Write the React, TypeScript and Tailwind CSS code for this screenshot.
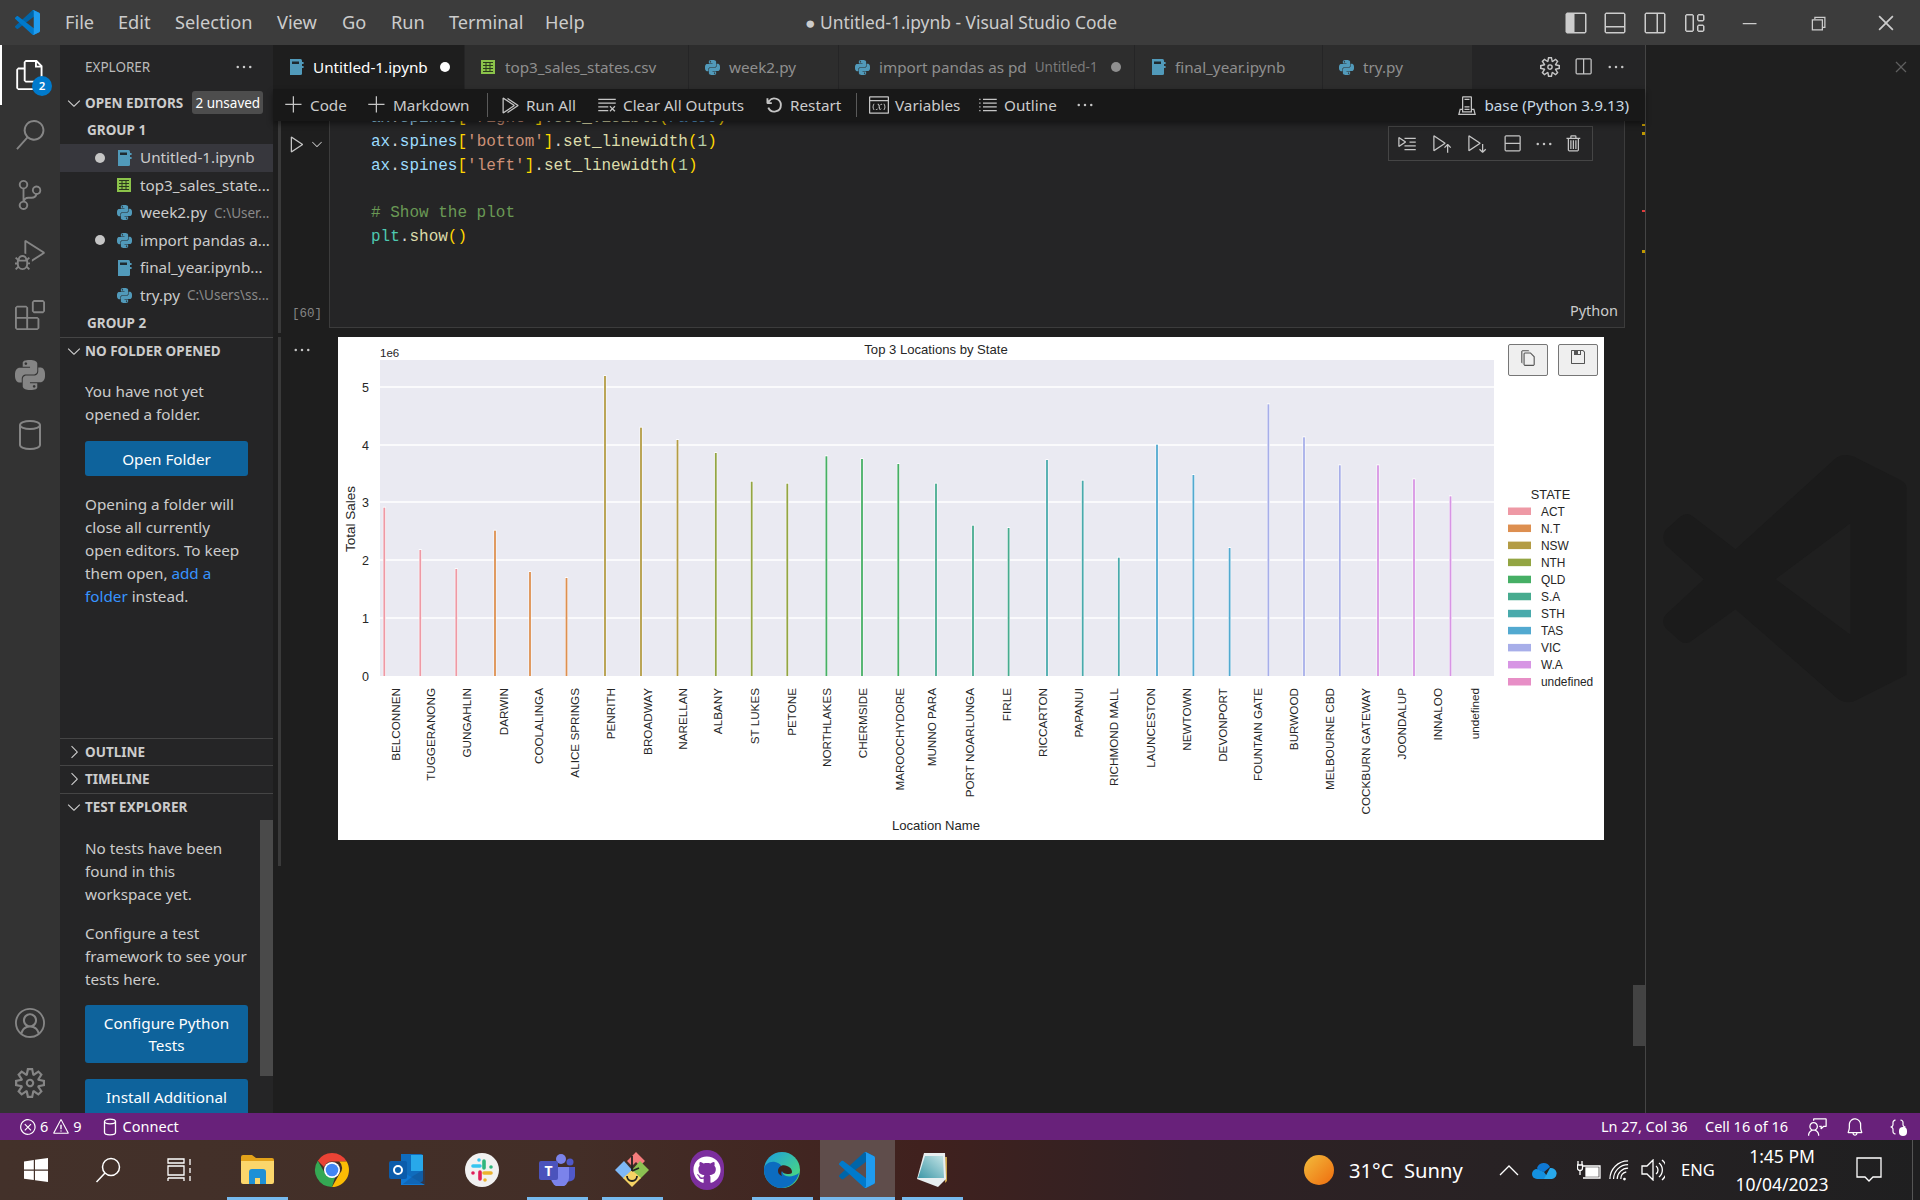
import type { ReactNode } from "react";
import {
  VscAccount, VscAdd, VscBell, VscChevronDown, VscChevronRight, VscChromeClose, VscChromeMinimize, VscChromeRestore,
  VscClearAll, VscClose, VscCopy, VscDebugAlt, VscDebugLineByLine, VscDebugRestart, VscEllipsis, VscError, VscExtensions,
  VscFeedback, VscFiles, VscJson, VscLayout, VscLayoutPanelOff, VscLayoutSidebarLeft, VscLayoutSidebarRightOff, VscListUnordered,
  VscPlay, VscRunAbove, VscRunAll, VscRunBelow, VscSave, VscSearch, VscServerEnvironment, VscSettingsGear, VscSourceControl,
  VscSplitHorizontal, VscSplitVertical, VscTrash, VscVariableGroup, VscWarning,
} from "react-icons/vsc";
import { SiPython } from "react-icons/si";
import { FaGithub } from "react-icons/fa";

function VsLogo({ size }: { size: number }) {
  return (
    <svg width={size} height={size} viewBox="0 0 100 100">
      <path fill="#0065A9" d="M96.46 10.8 75.86.88c-2.39-1.15-5.24-.66-7.11 1.2L1.3 63.58c-1.81 1.66-1.81 4.51 0 6.16l5.51 5.01c1.49 1.35 3.72 1.45 5.32.24L93.36 13.37c2.73-2.07 6.64-.12 6.64 3.3v-.24c0-2.4-1.38-4.59-3.54-5.63Z" />
      <path fill="#007ACC" d="M96.46 89.2 75.86 99.12c-2.39 1.15-5.24.66-7.11-1.2L1.3 36.42c-1.81-1.66-1.81-4.51 0-6.17l5.51-5c1.49-1.35 3.72-1.45 5.32-.24l81.23 61.62c2.73 2.07 6.64.12 6.64-3.3v.24c0 2.4-1.38 4.59-3.54 5.63Z" />
      <path fill="#1F9CF0" d="M75.86 99.13c-2.39 1.14-5.24.66-7.11-1.21 2.31 2.3 6.25.67 6.25-2.59V4.67c0-3.26-3.94-4.89-6.25-2.59C70.62.21 73.47-.27 75.86.87l20.6 9.91c2.16 1.04 3.54 3.23 3.54 5.63v67.18c0 2.4-1.38 4.59-3.54 5.63l-20.6 9.91Z" />
    </svg>
  );
}

function NotebookIcon() {
  return (
    <svg width="18" height="18" viewBox="0 0 18 18">
      <path fill="#519aba" d="M3 1h10.5a1.5 1.5 0 0 1 1.5 1.5v13a1.5 1.5 0 0 1-1.5 1.5H3Z" />
      <rect x="5" y="3.5" width="7" height="2.5" fill="#1e2a30" />
      <rect x="15" y="4" width="1.6" height="2" fill="#519aba" />
      <rect x="15" y="8" width="1.6" height="2" fill="#519aba" />
    </svg>
  );
}

function CsvIcon() {
  return (
    <svg width="18" height="18" viewBox="0 0 18 18">
      <rect x="2" y="2" width="14" height="14" fill="#8bc34a" />
      <path stroke="#2b3a1c" strokeWidth="1" fill="none" d="M4 4.5h10M4 7.5h10M4 10.5h10M4 13.5h10M7 4.5v9M11 4.5v9" />
    </svg>
  );
}

function PyIcon() {
  return <SiPython size={15} color="#519aba" />;
}

function Dot({ className }: { className: string }) {
  return <span className={`block h-[10px] w-[10px] rounded-full ${className}`} />;
}

function ActivityIcon({ children, active }: { children: ReactNode; active?: boolean }) {
  return (
    <div className={`relative flex h-[60px] w-[60px] shrink-0 items-center justify-center ${active ? "border-l-2 border-white pr-[2px] text-white" : "text-[#858585]"}`}>
      {children}
    </div>
  );
}

function ActivityBar() {
  return (
    <div className="flex w-[60px] shrink-0 flex-col bg-[#333333]">
      <ActivityIcon active>
        <VscFiles size={30} />
        <span className="absolute left-[30px] top-[31px] flex h-[20px] w-[20px] items-center justify-center rounded-full bg-[#007acc] text-[11.5px] font-semibold text-white">2</span>
      </ActivityIcon>
      <ActivityIcon><VscSearch size={30} /></ActivityIcon>
      <ActivityIcon><VscSourceControl size={30} /></ActivityIcon>
      <ActivityIcon><VscDebugAlt size={30} /></ActivityIcon>
      <ActivityIcon><VscExtensions size={30} /></ActivityIcon>
      <ActivityIcon><SiPython size={30} /></ActivityIcon>
      <ActivityIcon>
        <svg width="30" height="32" viewBox="0 0 30 32" fill="none" stroke="#858585" strokeWidth="2">
          <ellipse cx="15" cy="6" rx="10" ry="4" />
          <path d="M5 6v20c0 2.2 4.5 4 10 4s10-1.8 10-4V6" />
        </svg>
      </ActivityIcon>
      <div className="mt-auto" />
      <ActivityIcon><VscAccount size={30} /></ActivityIcon>
      <ActivityIcon><VscSettingsGear size={30} /></ActivityIcon>
    </div>
  );
}

function SectionHeader({ title, open, border = true, children }: { title: string; open?: boolean; border?: boolean; children?: ReactNode }) {
  return (
    <div className={`flex h-[27.5px] shrink-0 items-center text-[13.5px] font-bold text-[#cccccc] ${border ? "border-t border-[#454545]" : ""}`}>
      <span className="flex w-[25px] justify-center pl-[2px]">
        {open ? <VscChevronDown size={20} /> : <VscChevronRight size={20} />}
      </span>
      <span className="whitespace-nowrap">{title}</span>
      {children}
    </div>
  );
}

function FileRow({ icon, name, dim, dirty, active }: { icon: ReactNode; name: string; dim?: string; dirty?: boolean; active?: boolean }) {
  return (
    <div className={`flex h-[27.5px] shrink-0 items-center overflow-hidden whitespace-nowrap pl-[35px] text-[15.25px] text-[#cccccc] ${active ? "bg-[#37373d]" : ""}`}>
      <span className="w-[10px]">{dirty && <Dot className="bg-[#c5c5c5]" />}</span>
      <span className="ml-[10px] flex w-[18px] justify-center">{icon}</span>
      <span className="ml-[7px]">{name}</span>
      {dim && <span className="ml-[7px] text-[13.5px] text-[#8a8a8a]">{dim}</span>}
    </div>
  );
}

function GroupLabel({ children }: { children: ReactNode }) {
  return <div className="flex h-[27.5px] shrink-0 items-center pl-[27px] text-[13.5px] font-bold text-[#cccccc]">{children}</div>;
}

function BlueButton({ children, className }: { children: ReactNode; className: string }) {
  return <div className={`flex w-[163px] shrink-0 flex-col items-center rounded-[3px] bg-[#0e639c] text-center text-[15.25px] leading-[22px] text-white ${className}`}>{children}</div>;
}

function Sidebar() {
  return (
    <div className="relative flex w-[213px] shrink-0 flex-col overflow-hidden bg-[#252526]">
      <div className="flex h-[44px] shrink-0 items-center pl-[25px] text-[13.5px] text-[#bbbbbb]">
        EXPLORER
        <VscEllipsis size={20} className="ml-[84px] text-[#cccccc]" />
      </div>
      <SectionHeader title="OPEN EDITORS" open border={false}>
        <span className="ml-[9px] flex h-[23px] w-[71px] items-center justify-center rounded-[3px] bg-[#4d4d4d] text-[13.5px] font-normal text-white">2 unsaved</span>
      </SectionHeader>
      <GroupLabel>GROUP 1</GroupLabel>
      <FileRow active dirty icon={<NotebookIcon />} name="Untitled-1.ipynb" />
      <FileRow icon={<CsvIcon />} name="top3_sales_state..." />
      <FileRow icon={<PyIcon />} name="week2.py" dim="C:\User..." />
      <FileRow dirty icon={<PyIcon />} name="import pandas a..." />
      <FileRow icon={<NotebookIcon />} name="final_year.ipynb..." />
      <FileRow icon={<PyIcon />} name="try.py" dim="C:\Users\ss..." />
      <GroupLabel>GROUP 2</GroupLabel>

      <div className="flex h-[401px] shrink-0 flex-col">
        <SectionHeader title="NO FOLDER OPENED" open />
        <div className="flex flex-col pl-[25px] pr-[20px] pt-[16px] text-[15.25px] leading-[23px] text-[#cccccc]">
          <p>You have not yet<br />opened a folder.</p>
          <BlueButton className="mt-[15px] h-[35px] justify-center">Open Folder</BlueButton>
          <p className="mt-[17px]">
            Opening a folder will<br />close all currently<br />open editors. To keep<br />them open, <span className="text-[#3794ff]">add a<br />folder</span> instead.
          </p>
        </div>
      </div>
      <SectionHeader title="OUTLINE" />
      <SectionHeader title="TIMELINE" />
      <SectionHeader title="TEST EXPLORER" open />
      <div className="flex flex-col pl-[25px] pr-[20px] pt-[17px] text-[15.25px] leading-[23px] text-[#cccccc]">
        <p className="whitespace-nowrap">No tests have been<br />found in this<br />workspace yet.</p>
        <p className="mt-[16px] whitespace-nowrap">Configure a test<br />framework to see your<br />tests here.</p>
        <BlueButton className="mt-[14px] h-[58px] justify-center">Configure Python<br />Tests</BlueButton>
        <BlueButton className="mt-[16px] h-[58px] pt-[7px]">Install Additional</BlueButton>
      </div>
      {/* sidebar scrollbar */}
      <div className="absolute left-[200px] top-[775px] h-[256px] w-[13px] bg-[#4a4a4a]" />
    </div>
  );
}

function Tab({ width, icon, name, extra, active }: { width: string; icon: ReactNode; name: string; extra?: ReactNode; active?: boolean }) {
  return (
    <div className={`flex h-full shrink-0 items-center whitespace-nowrap border-r border-[#252526] pl-[14px] text-[15.25px] ${width} ${active ? "bg-[#1e1e1e] text-white" : "bg-[#2d2d2d] text-[#8f8f8f]"}`}>
      <span className="flex w-[18px] justify-center">{icon}</span>
      <span className="ml-[8px]">{name}</span>
      {extra}
    </div>
  );
}

function TabBar() {
  return (
    <div className="flex h-[44px] shrink-0 bg-[#252526]">
      <Tab active width="w-[192px]" icon={<NotebookIcon />} name="Untitled-1.ipynb" extra={<Dot className="ml-auto mr-[14px] bg-white" />} />
      <Tab width="w-[224px]" icon={<CsvIcon />} name="top3_sales_states.csv" />
      <Tab width="w-[150px]" icon={<PyIcon />} name="week2.py" />
      <Tab width="w-[296px]" icon={<PyIcon />} name="import pandas as pd" extra={
        <>
          <span className="ml-[8px] text-[13.5px] text-[#7b7b7b]">Untitled-1</span>
          <Dot className="ml-auto mr-[13px] bg-[#8f8f8f]" />
        </>
      } />
      <Tab width="w-[188px]" icon={<NotebookIcon />} name="final_year.ipynb" />
      <Tab width="w-[150px]" icon={<PyIcon />} name="try.py" />
      <div className="ml-auto flex items-center gap-[13px] pr-[19px] text-[#c5c5c5]">
        <VscSettingsGear size={20} />
        <VscSplitHorizontal size={20} />
        <VscEllipsis size={20} />
      </div>
    </div>
  );
}

function ToolItem({ width, icon, label }: { width: string; icon: ReactNode; label: string }) {
  return (
    <div className={`flex shrink-0 items-center gap-[6px] whitespace-nowrap ${width}`}>
      <span className="flex w-[20px] justify-center text-[#c5c5c5]">{icon}</span>
      {label}
    </div>
  );
}

function NotebookToolbar() {
  return (
    <div className="relative z-10 flex h-[32px] shrink-0 items-center bg-[#181818] pl-[11px] text-[15.25px] text-[#cccccc] shadow-[0_3px_6px_rgba(0,0,0,0.45)]">
      <ToolItem width="w-[83px]" icon={<VscAdd size={20} />} label="Code" />
      <ToolItem width="w-[110px]" icon={<VscAdd size={20} />} label="Markdown" />
      <div className="ml-[10px] h-[24px] w-px shrink-0 bg-[#5a5a5a]" />
      <div className="ml-[12px] flex">
        <ToolItem width="w-[97px]" icon={<VscRunAll size={20} />} label="Run All" />
        <ToolItem width="w-[167px]" icon={<VscClearAll size={20} />} label="Clear All Outputs" />
        <ToolItem width="w-[82px]" icon={<VscDebugRestart size={20} />} label="Restart" />
      </div>
      <div className="ml-[10px] h-[24px] w-px shrink-0 bg-[#5a5a5a]" />
      <div className="ml-[12px] flex items-center">
        <ToolItem width="w-[109px]" icon={<VscVariableGroup size={20} />} label="Variables" />
        <ToolItem width="w-[97px]" icon={<VscListUnordered size={20} />} label="Outline" />
        <VscEllipsis size={20} className="text-[#c5c5c5]" />
      </div>
      <div className="ml-auto flex items-center gap-[7px] pr-[16px] text-[#9cdcfe]">
        <VscServerEnvironment size={20} className="text-[#c5c5c5]" />
        <span className="whitespace-nowrap text-[#c8d8e4]">base (Python 3.9.13)</span>
      </div>
    </div>
  );
}

const kw = "text-[#9cdcfe]";
const pn = "text-[#d4d4d4]";
const br = "text-[#ffd700]";
const st = "text-[#ce9178]";
const fn = "text-[#dcdcaa]";
const nm = "text-[#b5cea8]";

function SpineLine({ side, call, arg }: { side: string; call: string; arg: string }) {
  return (
    <div className="h-[23.75px] whitespace-pre">
      <span className={kw}>ax</span><span className={pn}>.</span><span className={kw}>spines</span><span className={br}>[</span>
      <span className={st}>'{side}'</span><span className={br}>]</span><span className={pn}>.</span><span className={fn}>{call}</span>
      <span className={br}>(</span><span className={arg === "False" ? "text-[#569cd6]" : nm}>{arg}</span><span className={br}>)</span>
    </div>
  );
}

function CodeCell() {
  return (
    <div className="flex h-[207px] shrink-0">
      <div className="flex w-[56px] shrink-0 flex-col pb-[6px] pt-[13px]">
        <div className="flex items-center pl-[14px] text-[#c5c5c5]">
          <VscPlay size={20} />
          <VscChevronDown size={16} className="ml-[2px]" />
        </div>
        <div className="mt-auto pl-[19px] font-['Liberation_Mono',monospace] text-[12.5px] leading-[16px] text-[#858585]">[60]</div>
      </div>
      <div className="relative flex w-[1296px] shrink-0 flex-col overflow-hidden border-b border-l border-r border-[#3c3c3c] bg-[#252526]">
        <div className="-mt-[14px] ml-[41px] font-['Liberation_Mono',monospace] text-[16px] leading-[23.75px]">
          <SpineLine side="right" call="set_visible" arg="False" />
          <SpineLine side="bottom" call="set_linewidth" arg="1" />
          <SpineLine side="left" call="set_linewidth" arg="1" />
          <div className="h-[23.75px]" />
          <div className="h-[23.75px] text-[#6a9955]"># Show the plot</div>
          <div className="h-[23.75px]">
            <span className="text-[#4ec9b0]">plt</span><span className={pn}>.</span><span className={fn}>show</span><span className={br}>()</span>
          </div>
        </div>
        <div className="mb-[5px] mr-[6px] mt-auto self-end text-[14.5px] text-[#cccccc]">Python</div>

        <div className="absolute right-[31px] top-[5px] flex h-[35px] w-[205px] items-center border border-[#454545] bg-[#252526] text-[#c5c5c5]">
          <span className="flex w-[35px] justify-center"><VscDebugLineByLine size={20} /></span>
          <span className="flex w-[35px] justify-center"><VscRunAbove size={20} /></span>
          <span className="flex w-[35px] justify-center"><VscRunBelow size={20} /></span>
          <span className="flex w-[35px] justify-center"><VscSplitVertical size={20} /></span>
          <span className="flex w-[30px] justify-center"><VscEllipsis size={20} /></span>
          <span className="flex w-[30px] justify-center"><VscTrash size={20} /></span>
        </div>
      </div>
    </div>
  );
}

const LOCATIONS: [string, number, number, number, string][] = [
  ["BELCONNEN", 384.3, 507.7, 395.8, "#ee99a5"],
  ["TUGGERANONG", 420.3, 550, 431, "#ee99a5"],
  ["GUNGAHLIN", 456.3, 569, 467, "#ee99a5"],
  ["DARWIN", 495, 530.7, 504, "#dd8f50"],
  ["COOLALINGA", 530, 572, 539.3, "#dd8f50"],
  ["ALICE SPRINGS", 566.5, 578, 574.5, "#dd8f50"],
  ["PENRITH", 605, 376, 611, "#b39c45"],
  ["BROADWAY", 641, 427.7, 648, "#b39c45"],
  ["NARELLAN", 677.5, 440, 683, "#b39c45"],
  ["ALBANY", 715.8, 453, 718.4, "#93a543"],
  ["ST LUKES", 751.7, 481.7, 754.8, "#93a543"],
  ["PETONE", 787.3, 483.7, 792, "#93a543"],
  ["NORTHLAKES", 826.4, 456.3, 826.7, "#46af65"],
  ["CHERMSIDE", 862, 459, 863, "#46af65"],
  ["MAROOCHYDORE", 898.3, 464, 899.5, "#46af65"],
  ["MUNNO PARA", 936, 483.7, 932, "#47ab8f"],
  ["PORT NOARLUNGA", 973, 525.7, 970, "#47ab8f"],
  ["FIRLE", 1008.6, 528, 1007, "#47ab8f"],
  ["RICCARTON", 1047, 460, 1043.4, "#49aaac"],
  ["PAPANUI", 1082.7, 480.7, 1078.7, "#49aaac"],
  ["RICHMOND MALL", 1118.8, 557.7, 1114, "#49aaac"],
  ["LAUNCESTON", 1157, 444.7, 1150.5, "#52a9d0"],
  ["NEWTOWN", 1193.4, 475, 1186.7, "#52a9d0"],
  ["DEVONPORT", 1229.6, 548, 1223, "#52a9d0"],
  ["FOUNTAIN GATE", 1268.4, 404.3, 1257.7, "#a7aee9"],
  ["BURWOOD", 1304, 437.3, 1294, "#a7aee9"],
  ["MELBOURNE CBD", 1339.8, 465.3, 1330, "#a7aee9"],
  ["COCKBURN GATEWAY", 1378, 465.3, 1366, "#d795e4"],
  ["JOONDALUP", 1414, 479.3, 1402, "#d795e4"],
  ["INNALOO", 1450.5, 496.3, 1438, "#d795e4"],
];

const STATES: [string, string][] = [
  ["ACT", "#ee99a5"], ["N.T", "#dd8f50"], ["NSW", "#b39c45"], ["NTH", "#93a543"], ["QLD", "#46af65"], ["S.A", "#47ab8f"],
  ["STH", "#49aaac"], ["TAS", "#52a9d0"], ["VIC", "#a7aee9"], ["W.A", "#d795e4"], ["undefined", "#e78ec6"],
];

const TICKS: [string, number][] = [["0", 676], ["1", 618], ["2", 560], ["3", 502], ["4", 445], ["5", 387]];

function Chart() {
  return (
    <svg width="1266" height="503" viewBox="338 337 1266 503" className="block font-['Liberation_Sans',Arial,sans-serif]" fill="#262626">
      <rect x="380" y="360" width="1114" height="316" fill="#eaeaf2" />
      {TICKS.map(([t, y]) => (
        <g key={t}>
          {t !== "0" && <rect x="380" y={y - 0.75} width="1114" height="1.5" fill="#ffffff" />}
          <text x="369" y={y + 4.5} textAnchor="end" fontSize="12.5">{t}</text>
        </g>
      ))}
      {LOCATIONS.map(([name, x, top, lx, color]) => (
        <g key={name}>
          <rect x={x - 1.5} y={top - 1} width="3" height={676 - top + 1} fill="#ffffff" opacity="0.8" />
          <rect x={x - 0.9} y={top} width="1.8" height={676 - top} fill={color} />
          <text transform={`translate(${lx + 4} 688) rotate(-90)`} textAnchor="end" fontSize="11.7">{name}</text>
        </g>
      ))}
      <text transform="translate(1478.6 688) rotate(-90)" textAnchor="end" fontSize="11.7">undefined</text>
      <text x="380" y="357" fontSize="11.5">1e6</text>
      <text x="936" y="354" textAnchor="middle" fontSize="13.1">Top 3 Locations by State</text>
      <text x="936" y="829.5" textAnchor="middle" fontSize="13.1">Location Name</text>
      <text transform="translate(354.5 519) rotate(-90)" textAnchor="middle" fontSize="13.5">Total Sales</text>
      <text x="1550.5" y="498.5" textAnchor="middle" fontSize="12.8">STATE</text>
      {STATES.map(([label, color], i) => (
        <g key={label}>
          <rect x="1508" y={507.5 + i * 17.05} width="23" height="7.5" fill={color} />
          <text x="1541" y={515.5 + i * 17.05} fontSize="11.9">{label}</text>
        </g>
      ))}
    </svg>
  );
}

function OutputCell() {
  return (
    <div className="mt-[9px] flex">
      <div className="flex w-[65px] shrink-0 justify-end pr-[26px] pt-[3px] text-[#c5c5c5]">
        <VscEllipsis size={20} />
      </div>
      <div className="relative h-[503px] w-[1266px] shrink-0 bg-white">
        <Chart />
        <div className="absolute left-[1170px] top-[7px] flex gap-[10px]">
          <span className="flex h-[32px] w-[40px] items-start justify-center rounded-[2px] border border-[#767676] bg-[#efefef] pt-[4px] text-[#555555]"><VscCopy size={18} /></span>
          <span className="flex h-[32px] w-[40px] items-start justify-center rounded-[2px] border border-[#767676] bg-[#efefef] pt-[4px] text-[#555555]"><VscSave size={16} /></span>
        </div>
      </div>
    </div>
  );
}

function Editor() {
  return (
    <div className="flex w-[1373px] shrink-0 flex-col border-r border-[#454545] bg-[#1e1e1e]">
      <TabBar />
      <NotebookToolbar />
      <div className="relative flex-1 overflow-hidden">
        <CodeCell />
        <OutputCell />
        {/* scroll rails and overview marks */}
        <div className="absolute left-[5px] top-0 h-[212px] w-[3px] bg-[#3a3a3a]" />
        <div className="absolute left-[5px] top-[216px] h-[529px] w-[3px] bg-[#3a3a3a]" />
        <div className="absolute right-0 top-[864px] h-[61px] w-[12px] bg-[#434343]" />
        <div className="absolute right-0 top-[3px] h-[2px] w-[3px] bg-[#c09800]" />
        <div className="absolute right-0 top-[11px] h-[3px] w-[3px] bg-[#c09800]" />
        <div className="absolute right-0 top-[89px] h-[2px] w-[3px] bg-[#e03c3c]" />
        <div className="absolute right-0 top-[129px] h-[3px] w-[3px] bg-[#c09800]" />
      </div>
    </div>
  );
}

function RightPanel() {
  return (
    <div className="relative flex-1 overflow-hidden bg-[#1f1f1f]">
      <div className="flex h-[44px] items-center justify-end pr-[9px] text-[#5f5f5f]">
        <VscClose size={20} />
      </div>
      <svg width="245" height="248" viewBox="190 105 734 745" className="absolute left-[16px] top-[410px]">
        <path fillRule="evenodd" fill="#1b1b1b" d="M740 105Q760 105 775 115L905 180Q924 190 924 205V765L775 840Q745 858 715 835L410 568 275 665Q260 675 245 665L200 625Q185 605 200 585L315 478 200 375Q185 350 200 330L245 290Q262 275 280 288L410 388 705 120Q720 105 740 105ZM755 310 530 478 755 645Z" />
      </svg>
    </div>
  );
}

function TitleBar() {
  const menu: [string, string][] = [["File", "w-[53px]"], ["Edit", "w-[57px]"], ["Selection", "w-[102px]"], ["View", "w-[65px]"], ["Go", "w-[49px]"], ["Run", "w-[58px]"], ["Terminal", "w-[96px]"], ["Help", "w-[260px]"]];
  return (
    <div className="flex h-[45px] shrink-0 items-center bg-[#3c3c3c] text-[#cccccc]">
      <div className="flex w-[65px] shrink-0 justify-start pl-[15px]"><VsLogo size={25} /></div>
      {menu.map(([m, w]) => <span key={m} className={`shrink-0 text-[18.2px] ${w}`}>{m}</span>)}
      <span className="whitespace-nowrap text-[17.4px]">● Untitled-1.ipynb - Visual Studio Code</span>
      <div className="ml-auto flex items-center">
        <span className="flex w-[39.5px] justify-center"><VscLayoutSidebarLeft size={24} /></span>
        <span className="flex w-[39.5px] justify-center"><VscLayoutPanelOff size={24} /></span>
        <span className="flex w-[39.5px] justify-center"><VscLayoutSidebarRightOff size={24} /></span>
        <span className="flex w-[39.5px] justify-center"><VscLayout size={24} /></span>
        <span className="flex w-[69px] justify-center"><VscChromeMinimize size={20} /></span>
        <span className="flex w-[69px] justify-center"><VscChromeRestore size={20} /></span>
        <span className="flex w-[68px] justify-center"><VscChromeClose size={22} /></span>
      </div>
    </div>
  );
}

function StatusBar() {
  return (
    <div className="flex h-[27px] shrink-0 items-center bg-[#68217a] pl-[19px] text-[14.5px] text-white">
      <VscError size={18} />
      <span className="ml-[3px]">6</span>
      <VscWarning size={18} className="ml-[4px]" />
      <span className="ml-[3px]">9</span>
      <svg width="14" height="18" viewBox="0 0 14 18" fill="none" stroke="#fff" strokeWidth="1.3" className="ml-[21px]">
        <ellipse cx="7" cy="3.5" rx="5.5" ry="2.3" />
        <path d="M1.5 3.5v11c0 1.3 2.5 2.3 5.5 2.3s5.5-1 5.5-2.3v-11" />
      </svg>
      <span className="ml-[6px]">Connect</span>
      <div className="ml-auto flex items-center">
        <span className="w-[104px]">Ln 27, Col 36</span>
        <span className="w-[103px]">Cell 16 of 16</span>
        <VscFeedback size={20} />
        <VscBell size={20} className="ml-[17px]" />
        <span className="relative ml-[23px] mr-[12px] block h-[20px] w-[20px]">
          <VscJson size={20} />
          <span className="absolute bottom-[1px] right-[1px] h-[9px] w-[8px] rounded-full bg-white" />
        </span>
      </div>
    </div>
  );
}

function TaskCell({ children, line, hot }: { children: ReactNode; line?: boolean; hot?: boolean }) {
  return (
    <div className={`relative flex h-full w-[75px] shrink-0 items-center justify-center ${hot ? "bg-[#5f4d4b]" : ""}`}>
      {children}
      {line && <span className={`absolute bottom-0 h-[3px] bg-[#76b9ed] ${hot ? "inset-x-0" : "inset-x-[7px]"}`} />}
    </div>
  );
}

function Taskbar() {
  return (
    <div className="flex h-[60px] shrink-0 items-center bg-[linear-gradient(90deg,#43312a_0%,#432e27_30%,#40211e_48%,#2f2124_62%,#272224_80%,#1f1f20_100%)] text-white">
      <div className="flex h-full w-[72px] shrink-0 items-center justify-center">
        <svg width="24" height="24" viewBox="0 0 24 24" fill="#fff"><path d="M0 3.4 9.8 2v9.5H0ZM11 1.8 24 0v11.5H11ZM0 12.7h9.8v9.400L0 20.7ZM11 12.7h13V24l-13-1.8Z" /></svg>
      </div>
      <div className="flex h-full w-[72px] shrink-0 items-center justify-center">
        <svg width="26" height="26" viewBox="0 0 26 26" fill="none" stroke="#fff" strokeWidth="1.5"><circle cx="16" cy="10" r="8.5" /><path d="M10 16 1.5 25" /></svg>
      </div>
      <div className="flex h-full w-[72px] shrink-0 items-center justify-center">
        <svg width="26" height="24" viewBox="0 0 26 24" fill="none" stroke="#fff" strokeWidth="1.3"><path d="M1 1h16v4H1zM1 8h16v9H1zM1 20h16v3M1 20v3M23 1v6M23 10v5M23 18v5" /></svg>
      </div>
      <div className="ml-[3.5px] flex h-full">
        <TaskCell line>
          <svg width="33" height="30" viewBox="0 0 33 30">
            <path fill="#e3a21a" d="M0 2q0-2 2-2h9l4 3h16q2 0 2 2v3H0Z" />
            <path fill="#fbd66b" d="M0 6h33v21q0 2-2 2H2q-2 0-2-2Z" />
            <path fill="#1e90d6" d="M8 29V17q0-3 3-3h11q3 0 3 3v12h-6v-6h-5v6Z" />
          </svg>
        </TaskCell>
        <TaskCell>
          <svg width="36" height="36" viewBox="0 0 36 36">
            <path fill="#ea4335" d="M18 1a17 17 0 0 1 14.7 8.5H18a8.5 8.5 0 0 0-8 5.6L3.8 8.7A17 17 0 0 1 18 1Z" />
            <path fill="#fbbc04" d="M32.7 9.5A17 17 0 0 1 18 35l7.3-12.7a8.5 8.5 0 0 0-.1-12.8Z" />
            <path fill="#34a853" d="M18 35A17 17 0 0 1 3.8 8.700l7.3 12.9a8.500 8.500 0 0 0 10.200 2.800Z" />
            <circle cx="18" cy="18" r="8" fill="#fff" />
            <circle cx="18" cy="18" r="6.3" fill="#4285f4" />
          </svg>
        </TaskCell>
        <TaskCell>
          <svg width="36" height="32" viewBox="0 0 36 32">
            <path fill="#0f6cbd" d="M12 0h20a2 2 0 0 1 2 2v24a2 2 0 0 1-2 2H12Z" />
            <path fill="#28a8ea" d="M22 1h12v8H22ZM22 9h12v8H22Z" />
            <path fill="#0f78d4" d="M12 17 36 31H12Z" />
            <path fill="#14447d" d="M14 30h22V15L24 22Z" opacity="0.35" />
            <rect x="0" y="7" width="18" height="18" rx="2" fill="#0b5cab" />
            <circle cx="9" cy="16" r="4" fill="none" stroke="#fff" strokeWidth="2" />
          </svg>
        </TaskCell>
        <TaskCell>
          <svg width="34" height="34" viewBox="0 0 34 34" fill="none" strokeLinecap="round" strokeWidth="3.6">
            <circle cx="17" cy="17" r="17" fill="#f1f1f1" stroke="none" />
            <path stroke="#36c5f0" d="M8 13h7M14 7v0" />
            <path stroke="#2eb67d" d="M19 8v7M26 14v0" />
            <path stroke="#ecb22e" d="M26 20h-7M20 27v0" />
            <path stroke="#e01e5a" d="M15 26v-7M8 20v0" />
          </svg>
        </TaskCell>
        <TaskCell line>
          <svg width="36" height="32" viewBox="0 0 36 32">
            <circle cx="22" cy="5" r="5" fill="#7b83eb" />
            <circle cx="31" cy="8" r="3.5" fill="#5059c9" />
            <path fill="#5059c9" d="M26 13h10v9a6 6 0 0 1-10 4Z" />
            <path fill="#7b83eb" d="M12 13h18v11a9 9 0 0 1-18 0Z" />
            <rect x="0" y="7" width="19" height="19" rx="2" fill="#4b53bc" />
            <text x="9.5" y="22" textAnchor="middle" fontSize="14" fontWeight="700" fill="#fff">T</text>
          </svg>
        </TaskCell>
        <TaskCell line>
          <svg width="36" height="36" viewBox="0 0 36 36">
            <path fill="#f47c7c" d="M18 1 27 10 22 15l-4-4-4 4L9 10Z" transform="translate(4 -1)" />
            <path fill="#7eb8f7" d="M1 18 10 9l8 9-8 9Z" />
            <path fill="#8cc152" d="M35 18l-9 9-8-9 8-9Z" />
            <path fill="#f6d365" d="M18 35l-9-9 9-8 9 8Z" />
            <path stroke="#222" strokeWidth="1.8" fill="none" d="M18 4v15M13 24a5 5 0 0 0 10 0M18 19l7-3" />
          </svg>
        </TaskCell>
        <TaskCell>
          <span className="flex h-[40px] w-[34px] items-center justify-center rounded-full bg-[#7c2f9e]"><FaGithub size={28} color="#ffffff" /></span>
        </TaskCell>
        <TaskCell line>
          <svg width="36" height="36" viewBox="0 0 36 36">
            <defs>
              <linearGradient id="edgeTop" x1="0" y1="0" x2="1" y2="1"><stop offset="0" stopColor="#1b9de2" /><stop offset="1" stopColor="#54e36c" /></linearGradient>
            </defs>
            <circle cx="18" cy="18" r="18" fill="url(#edgeTop)" />
            <path fill="#0c6cc0" d="M0 18c0-6 6-9 11-8s9 5 8 9c-1 2 0 4 3 5 4 1 9 0 13-3-2 9-10 15-18 15C8 36 0 28 0 18Z" />
            <path fill="#40211e" d="M14 19c0-4 4-7 9-5 3 1 5 3 5 6 0 1-1 2-3 2-5 0-6-1-7-3-1 1-1 3 0 5-2-1-4-2-4-5Z" />
          </svg>
        </TaskCell>
        <TaskCell line hot><VsLogo size={36} /></TaskCell>
        <TaskCell line>
          <svg width="34" height="38" viewBox="0 0 34 38">
            <path fill="#c9a24a" d="M30 6h2v24l-2 2Z" />
            <path fill="#e8eef0" d="M9 2h21l1 26-8 8L2 28Z" />
            <path fill="url(#notepadFill)" d="M10 5h18l1 22H3Z" />
            <defs>
              <linearGradient id="notepadFill" x1="0" y1="1" x2="1" y2="0"><stop offset="0" stopColor="#3e98a8" /><stop offset="1" stopColor="#c4e4e6" /></linearGradient>
            </defs>
          </svg>
        </TaskCell>
      </div>
      <div className="ml-auto flex h-full items-center">
        <span className="block h-[30px] w-[30px] rounded-full bg-[linear-gradient(135deg,#f2bc3c,#ef6c0e)]" />
        <span className="ml-[15px] w-[140px] whitespace-pre text-[20.2px]">31°C  Sunny</span>
        <span className="flex w-[40px] justify-center">
          <svg width="20" height="12" viewBox="0 0 20 12" fill="none" stroke="#fff" strokeWidth="1.3"><path d="M1 11 10 2l9 9" /></svg>
        </span>
        <span className="flex w-[30px] justify-center">
          <svg width="25" height="18" viewBox="0 0 25 18"><path fill="#0f78d4" d="M5 7a7 7 0 0 1 13-1l-6 5-6-2Z" /><path fill="#1490df" d="M5 18a5 5 0 0 1 0-10l7 3 5 7Z" /><path fill="#28a8ea" d="M12 18l6-11a5 5 0 0 1 2 11Z" /></svg>
        </span>
        <span className="ml-[10px] flex w-[40px] justify-center">
          <svg width="24" height="20" viewBox="0 0 24 20" fill="none" stroke="#fff" strokeWidth="1.3"><path d="M6 6h17v12H6" /><path fill="#fff" d="M9 8h12v8H9Z" /><path d="M1 1v4M5 1v4M.5 5h5v3a2.5 2.5 0 0 1-5 0ZM3 10v5" /></svg>
        </span>
        <span className="flex w-[20px] justify-center">
          <svg width="22" height="24" viewBox="0 0 22 24" fill="none" stroke="#fff" strokeWidth="1.3"><path d="M1 22A20 20 0 0 1 21 2M5 22A16 16 0 0 1 21 6M9 22A12 12 0 0 1 21 10M13 22a8 8 0 0 1 6-8" /><circle cx="17" cy="22" r="1.5" fill="#fff" stroke="none" /></svg>
        </span>
        <span className="ml-[10px] flex w-[28px] justify-center">
          <svg width="24" height="22" viewBox="0 0 24 22" fill="none" stroke="#fff" strokeWidth="1.3"><path d="M1 7h5l6-6v20l-6-6H1ZM15 7a5 5 0 0 1 0 8M18 4a9 9 0 0 1 0 14M21 1a13 13 0 0 1 0 20" /></svg>
        </span>
        <span className="ml-[14px] w-[34px] whitespace-nowrap text-[16.5px]">ENG</span>
        <div className="ml-[17px] flex w-[100px] flex-col items-center text-[17.5px] leading-[28px]">
          <span>1:45 PM</span>
          <span>10/04/2023</span>
        </div>
        <span className="ml-[12px] flex w-[50px] justify-center">
          <svg width="26" height="26" viewBox="0 0 26 26" fill="none" stroke="#fff" strokeWidth="1.3"><path d="M1 1h24v19h-8l-4 4-4-4H1Z" /></svg>
        </span>
        <span className="ml-[18px] h-full w-px bg-[#555555]" />
        <span className="w-[7px]" />
      </div>
    </div>
  );
}

export default function App() {
  return (
    <div className="flex h-[1200px] w-[1920px] flex-col overflow-hidden bg-[#1e1e1e] font-['Noto_Sans',sans-serif]">
      <TitleBar />
      <div className="flex min-h-0 flex-1">
        <ActivityBar />
        <Sidebar />
        <Editor />
        <RightPanel />
      </div>
      <StatusBar />
      <Taskbar />
    </div>
  );
}
